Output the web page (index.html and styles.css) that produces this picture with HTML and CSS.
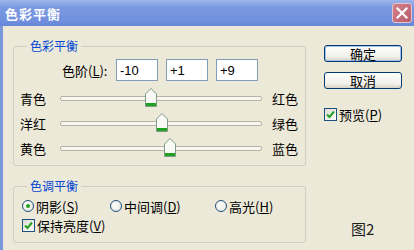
FILE: index.html
```html
<!DOCTYPE html>
<html lang="zh-CN">
<head>
  <meta charset="UTF-8" />
  <title>色彩平衡</title>
  <link rel="stylesheet" href="styles.css">
</head>
<body>
  <div class="window">
    <div class="titlebar">
      <span class="title">色彩平衡</span>
      <span class="close">
        <svg width="12" height="12" viewBox="0 0 12 12"><path d="M1.5 1.5 L10.5 10.5 M10.5 1.5 L1.5 10.5" stroke="#fff" stroke-width="2.2" stroke-linecap="square"/></svg>
      </span>
    </div>

    <div class="body">
      <div class="main">
        <fieldset class="group group-color">
          <legend>色彩平衡</legend>
          <div class="levels">
            <span class="levels-label">色阶(<u>L</u>):</span>
            <input class="level" type="text" value="-10">
            <input class="level" type="text" value="+1">
            <input class="level" type="text" value="+9">
          </div>

          <div class="slider-row">
            <span class="lbl-left">青色</span>
            <div class="track">
              <span class="thumb" style="left: 45%"><svg width="12" height="19" viewBox="0 0 12 19"><path d="M0.5 6 L6 0.5 L11.5 6 V18.5 H0.5 Z" fill="#fafaf6" stroke="#7f9a86"/><rect x="1" y="15" width="10" height="3" fill="#21a121"/></svg></span>
            </div>
            <span class="lbl-right">红色</span>
          </div>
          <div class="slider-row">
            <span class="lbl-left">洋红</span>
            <div class="track">
              <span class="thumb" style="left: 50.5%"><svg width="12" height="19" viewBox="0 0 12 19"><path d="M0.5 6 L6 0.5 L11.5 6 V18.5 H0.5 Z" fill="#fafaf6" stroke="#7f9a86"/><rect x="1" y="15" width="10" height="3" fill="#21a121"/></svg></span>
            </div>
            <span class="lbl-right">绿色</span>
          </div>
          <div class="slider-row">
            <span class="lbl-left">黄色</span>
            <div class="track">
              <span class="thumb" style="left: 54.5%"><svg width="12" height="19" viewBox="0 0 12 19"><path d="M0.5 6 L6 0.5 L11.5 6 V18.5 H0.5 Z" fill="#fafaf6" stroke="#7f9a86"/><rect x="1" y="15" width="10" height="3" fill="#21a121"/></svg></span>
            </div>
            <span class="lbl-right">蓝色</span>
          </div>
        </fieldset>

        <fieldset class="group group-tone">
          <legend>色调平衡</legend>
          <div class="radios">
            <label class="opt"><span class="radio checked"></span>阴影(<u>S</u>)</label>
            <label class="opt"><span class="radio"></span>中间调(<u>D</u>)</label>
            <label class="opt"><span class="radio"></span>高光(<u>H</u>)</label>
          </div>
          <label class="opt keep">
            <span class="checkbox"><svg width="9" height="9" viewBox="0 0 9 9"><path d="M1 4.5 L3.5 7 L8 1.5" fill="none" stroke="#21a121" stroke-width="2"/></svg></span>保持亮度(<u>V</u>)
          </label>
        </fieldset>
      </div>

      <div class="side">
        <button class="btn btn-default">确定</button>
        <button class="btn">取消</button>
        <label class="opt preview">
          <span class="checkbox"><svg width="9" height="9" viewBox="0 0 9 9"><path d="M1 4.5 L3.5 7 L8 1.5" fill="none" stroke="#21a121" stroke-width="2"/></svg></span>预览(<u>P</u>)
        </label>
        <div class="fig">图2</div>
      </div>
    </div>
  </div>
</body>
</html>
```

FILE: styles.css
```css
body {
  margin: 0;
  padding: 0;
  font-family: "Noto Sans CJK SC", "DejaVu Sans", sans-serif;
  font-size: 13px;
  color: #000;
  background-color: #ece9d8;
}
.window {
  width: 414px;
  height: 250px;
  display: flex;
  flex-direction: column;
  background-color: #ece9d8;
  overflow: hidden;
}
.titlebar {
  height: 26px;
  display: flex;
  align-items: center;
  justify-content: space-between;
  padding: 0 2px 0 5px;
  box-sizing: border-box;
  background: linear-gradient(#9db5ec, #7a98e0 30%, #7090de 80%, #6686d6);
}
.title {
  color: #fff;
  font-weight: bold;
  font-size: 13px;
  letter-spacing: 1px;
}
.close {
  width: 20px;
  height: 20px;
  box-sizing: border-box;
  border: 1px solid #e6c4cc;
  border-radius: 3px;
  background: linear-gradient(135deg, #d3808c, #b85c6a);
  display: flex;
  align-items: center;
  justify-content: center;
}
.body {
  flex: 1;
  display: flex;
  border-left: 3px solid #7b97dc;
  padding-left: 10px;
}
.main {
  width: 293px;
  padding-top: 13px;
}
.group {
  margin: 0;
  padding: 0 7px 4px 6px;
  border: 1px solid #d0cfbf;
  border-radius: 3px;
}
.group legend {
  font-size: 12px;
  line-height: 14px;
  color: #0046d5;
  padding: 0 3px;
  margin-left: 7px;
}
.levels {
  display: flex;
  align-items: center;
  gap: 8px;
  margin-top: 6px;
  padding-left: 42px;
}
.levels-label {
  width: 46px;
}
.level {
  width: 42px;
  height: 22px;
  box-sizing: border-box;
  border: 1px solid #7f9db9;
  padding: 0 3px;
  font-family: "Liberation Sans", sans-serif;
  font-size: 13px;
  background: #fff;
}
.slider-row {
  display: flex;
  align-items: center;
  height: 25px;
}
.levels + .slider-row {
  margin-top: 5px;
}
.lbl-left {
  width: 40px;
}
.track {
  position: relative;
  width: 200px;
  height: 3px;
  border: 1px solid #b6b3a4;
  border-radius: 2px;
  background: #f7f6f0;
}
.thumb {
  position: absolute;
  top: -9px;
  margin-left: -6px;
  line-height: 0;
}
.lbl-right {
  margin-left: 10px;
}
.group-tone {
  margin-top: 13px;
  padding-bottom: 9px;
}
.radios {
  display: grid;
  grid-template-columns: 88px 105px auto;
  margin-top: 5px;
  padding-left: 2px;
}
.opt {
  display: flex;
  align-items: center;
  height: 16px;
  white-space: nowrap;
}
.radio {
  width: 12px;
  height: 12px;
  box-sizing: border-box;
  border: 1px solid #1c5180;
  border-radius: 50%;
  background: radial-gradient(circle at 40% 40%, #fff, #e2e1d8);
  margin-right: 2px;
  display: flex;
  align-items: center;
  justify-content: center;
}
.radio.checked::after {
  content: "";
  width: 4px;
  height: 4px;
  border-radius: 50%;
  background: #21a121;
}
.checkbox {
  width: 13px;
  height: 13px;
  box-sizing: border-box;
  border: 1px solid #1c5180;
  background: linear-gradient(135deg, #dcdbd2, #fff);
  margin-right: 2px;
  display: flex;
  align-items: center;
  justify-content: center;
}
.keep {
  margin-top: 3px;
  padding-left: 2px;
}
.side {
  width: 79px;
  margin-left: 18px;
  padding-top: 19px;
  display: flex;
  flex-direction: column;
}
.btn {
  width: 78px;
  height: 17px;
  padding: 0;
  border: 1px solid #003c74;
  border-radius: 3px;
  background: linear-gradient(#ffffff, #f1f0ea 70%, #d8d3c7);
  font-family: "Noto Sans CJK SC", sans-serif;
  font-size: 13px;
  line-height: 14px;
  margin-bottom: 10px;
}
.btn-default {
  box-shadow: inset 0 0 0 1px #a7c1ee;
}
.preview {
  margin-top: 7px;
}
.fig {
  margin-top: auto;
  margin-bottom: 11px;
  margin-left: 27px;
  font-size: 15px;
  color: #222;
}
```
